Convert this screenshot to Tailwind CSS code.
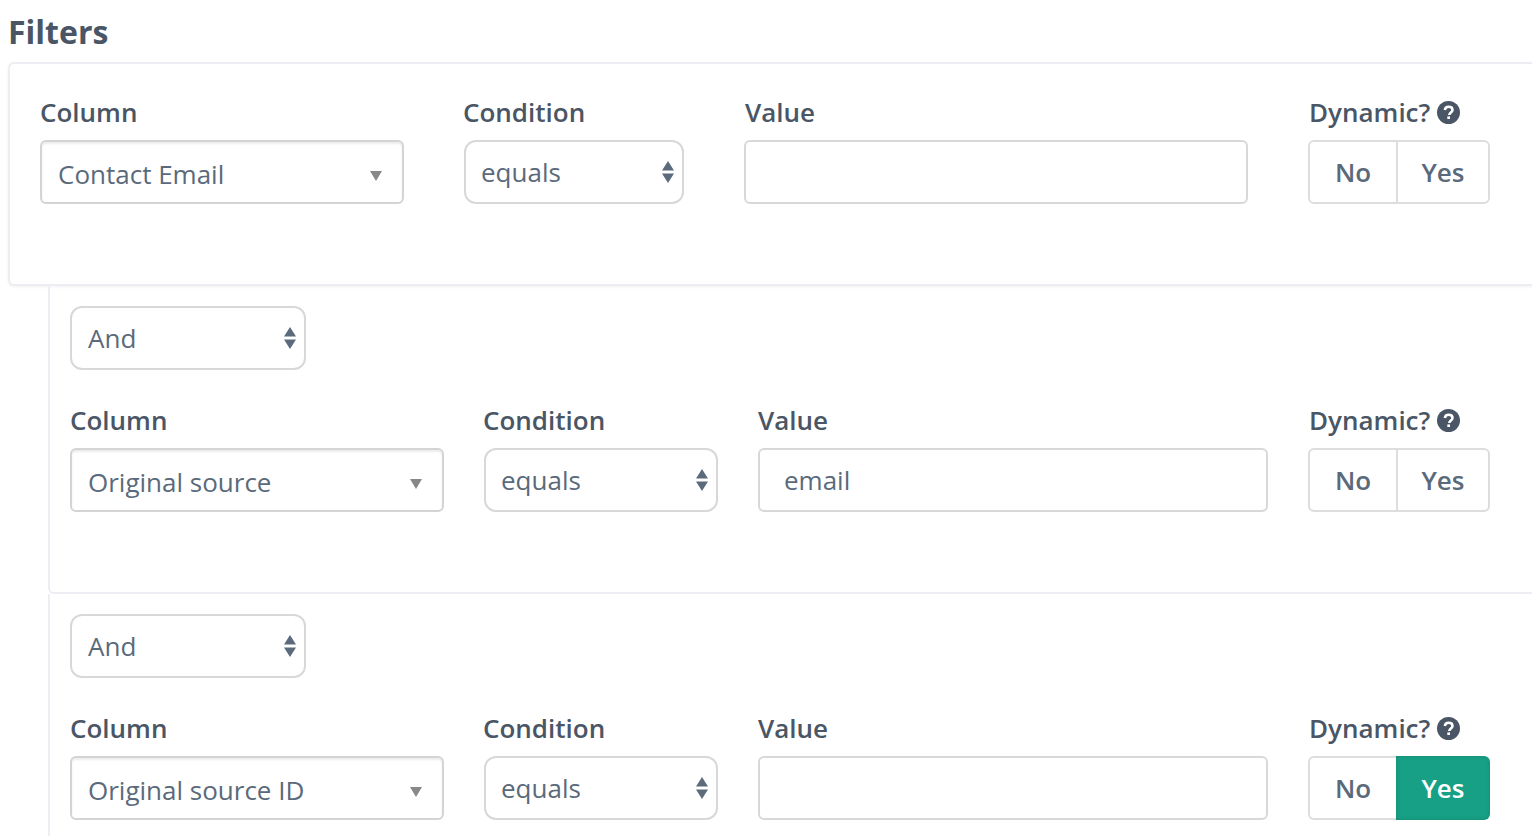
<!DOCTYPE html>
<html lang="en">
  <head>
    <meta charset="UTF-8" />
    <title>Filters</title>
    <script src="https://cdn.jsdelivr.net/npm/@tailwindcss/browser@4"></script>
  </head>
  <body class="bg-white overflow-hidden">
    <div class="w-[1532px] h-[836px] overflow-hidden pl-[8px] font-['Open_Sans',sans-serif] text-[#4a5665]">
      <h2 class="h-[62px] pt-[10px] text-[32px] leading-[44px] font-bold">Filters</h2>

      <div class="w-[1600px]">
        <!-- First filter -->
        <div class="h-[224px] border-2 border-[#eceef3] rounded-md shadow-[0_1px_3px_rgba(0,0,0,0.06)] pl-[30px] pt-[27px] bg-white">
          <div class="flex">
            <div class="w-[364px] mr-[60px]">
              <div class="h-[49px] text-[26px] leading-[42px] font-semibold">Column</div>
              <div class="h-[64px] border-2 border-[#d4d4d4] rounded-md shadow-[inset_0_2px_2px_rgba(0,0,0,0.08)] flex items-center justify-between pl-[16px] pr-[20px] text-[26px] text-[#5a6a7b]">
                <span class="mt-[4px]">Contact Email</span>
                <svg class="w-[12px] h-[10px] mt-[8px]" viewBox="0 0 12 10"><path d="M0 0h12L6 10z" fill="#888888" /></svg>
              </div>
            </div>
            <div class="w-[220px] mr-[60px]">
              <div class="h-[49px] -ml-[1px] text-[26px] leading-[42px] font-semibold">Condition</div>
              <div class="h-[64px] border-2 border-[#d8d8d8] rounded-[12px] flex items-center justify-between pl-[15px] pr-[8px] text-[26px] text-[#5a6a7b]">
                <span>equals</span>
                <svg class="w-[12px] h-[22px]" viewBox="0 0 12 22"><path d="M6 0l6 9.500H0zM0 12.500h12L6 22z" fill="#5c6b7c" /></svg>
              </div>
            </div>
            <div class="w-[504px] mr-[60px]">
              <div class="h-[49px] ml-[1px] text-[26px] leading-[42px] font-semibold">Value</div>
              <input type="text" class="w-full h-[64px] border-2 border-[#d8d8d8] rounded-md px-[24px] text-[26px] text-[#5a6a7b]" />
            </div>
            <div class="w-[182px]">
              <div class="h-[49px] ml-[1px] flex items-start text-[26px] leading-[42px] font-semibold">
                Dynamic?
                <svg class="w-[23px] h-[23px] ml-[7px] mt-[10px]" viewBox="0 0 23 23"><circle cx="11.500" cy="11.500" r="11.500" fill="#4a5665" /><path d="M7.800 9c.3-2 1.800-3.200 3.900-3.200 2.200 0 3.800 1.300 3.800 3.100 0 2.600-3.200 2.500-3.200 5" fill="none" stroke="#ffffff" stroke-width="2.600" /><path d="M10.300 15.400h2.700v2.600h-2.700z" fill="#ffffff" /></svg>
              </div>
              <div class="h-[64px] flex border-2 border-[#dddddd] rounded-md text-[26px] font-semibold text-[#5a6a7b]">
                <div class="w-[88px] border-r-2 border-[#dddddd] flex items-center justify-center">No</div>
                <div class="flex-1 flex items-center justify-center">Yes</div>
              </div>
            </div>
          </div>
        </div>

        <div class="ml-[40px]">
          <!-- Second filter -->
          <div class="h-[308px] border-l-2 border-b-2 border-[#eceef3] rounded-bl-md pl-[20px] pt-[20px]">
            <div class="w-[236px] h-[64px] border-2 border-[#d8d8d8] rounded-[12px] flex items-center justify-between pl-[16px] pr-[8px] text-[26px] text-[#5a6a7b]">
              <span class="mt-[1px]">And</span>
              <svg class="w-[12px] h-[22px]" viewBox="0 0 12 22"><path d="M6 0l6 9.500H0zM0 12.500h12L6 22z" fill="#5c6b7c" /></svg>
            </div>
            <div class="flex mt-[29px]">
              <div class="w-[374px] mr-[40px]">
                <div class="h-[49px] text-[26px] leading-[42px] font-semibold">Column</div>
                <div class="h-[64px] border-2 border-[#d4d4d4] rounded-md shadow-[inset_0_2px_2px_rgba(0,0,0,0.08)] flex items-center justify-between pl-[16px] pr-[20px] text-[26px] text-[#5a6a7b]">
                  <span class="mt-[4px]">Original source</span>
                  <svg class="w-[12px] h-[10px] mt-[8px]" viewBox="0 0 12 10"><path d="M0 0h12L6 10z" fill="#888888" /></svg>
                </div>
              </div>
              <div class="w-[234px] mr-[40px]">
                <div class="h-[49px] -ml-[1px] text-[26px] leading-[42px] font-semibold">Condition</div>
                <div class="h-[64px] border-2 border-[#d8d8d8] rounded-[12px] flex items-center justify-between pl-[15px] pr-[8px] text-[26px] text-[#5a6a7b]">
                  <span>equals</span>
                  <svg class="w-[12px] h-[22px]" viewBox="0 0 12 22"><path d="M6 0l6 9.500H0zM0 12.500h12L6 22z" fill="#5c6b7c" /></svg>
                </div>
              </div>
              <div class="w-[510px] mr-[40px]">
                <div class="h-[49px] text-[26px] leading-[42px] font-semibold">Value</div>
                <input type="text" value="email" class="w-full h-[64px] border-2 border-[#d8d8d8] rounded-md px-[24px] text-[26px] text-[#5a6a7b]" />
              </div>
              <div class="w-[182px]">
                <div class="h-[49px] ml-[1px] flex items-start text-[26px] leading-[42px] font-semibold">
                  Dynamic?
                  <svg class="w-[23px] h-[23px] ml-[7px] mt-[10px]" viewBox="0 0 23 23"><circle cx="11.500" cy="11.500" r="11.500" fill="#4a5665" /><path d="M7.800 9c.3-2 1.800-3.200 3.900-3.200 2.200 0 3.800 1.300 3.800 3.100 0 2.600-3.200 2.500-3.200 5" fill="none" stroke="#ffffff" stroke-width="2.600" /><path d="M10.300 15.400h2.700v2.600h-2.700z" fill="#ffffff" /></svg>
                </div>
                <div class="h-[64px] flex border-2 border-[#dddddd] rounded-md text-[26px] font-semibold text-[#5a6a7b]">
                  <div class="w-[88px] border-r-2 border-[#dddddd] flex items-center justify-center">No</div>
                  <div class="flex-1 flex items-center justify-center">Yes</div>
                </div>
              </div>
            </div>
          </div>

          <!-- Third filter -->
          <div class="h-[300px] border-l-2 border-[#eceef3] pl-[20px] pt-[20px]">
            <div class="w-[236px] h-[64px] border-2 border-[#d8d8d8] rounded-[12px] flex items-center justify-between pl-[16px] pr-[8px] text-[26px] text-[#5a6a7b]">
              <span class="mt-[1px]">And</span>
              <svg class="w-[12px] h-[22px]" viewBox="0 0 12 22"><path d="M6 0l6 9.500H0zM0 12.500h12L6 22z" fill="#5c6b7c" /></svg>
            </div>
            <div class="flex mt-[29px]">
              <div class="w-[374px] mr-[40px]">
                <div class="h-[49px] text-[26px] leading-[42px] font-semibold">Column</div>
                <div class="h-[64px] border-2 border-[#d4d4d4] rounded-md shadow-[inset_0_2px_2px_rgba(0,0,0,0.08)] flex items-center justify-between pl-[16px] pr-[20px] text-[26px] text-[#5a6a7b]">
                  <span class="mt-[4px]">Original source ID</span>
                  <svg class="w-[12px] h-[10px] mt-[8px]" viewBox="0 0 12 10"><path d="M0 0h12L6 10z" fill="#888888" /></svg>
                </div>
              </div>
              <div class="w-[234px] mr-[40px]">
                <div class="h-[49px] -ml-[1px] text-[26px] leading-[42px] font-semibold">Condition</div>
                <div class="h-[64px] border-2 border-[#d8d8d8] rounded-[12px] flex items-center justify-between pl-[15px] pr-[8px] text-[26px] text-[#5a6a7b]">
                  <span>equals</span>
                  <svg class="w-[12px] h-[22px]" viewBox="0 0 12 22"><path d="M6 0l6 9.500H0zM0 12.500h12L6 22z" fill="#5c6b7c" /></svg>
                </div>
              </div>
              <div class="w-[510px] mr-[40px]">
                <div class="h-[49px] text-[26px] leading-[42px] font-semibold">Value</div>
                <input type="text" class="w-full h-[64px] border-2 border-[#d8d8d8] rounded-md px-[24px] text-[26px] text-[#5a6a7b]" />
              </div>
              <div class="w-[182px]">
                <div class="h-[49px] ml-[1px] flex items-start text-[26px] leading-[42px] font-semibold">
                  Dynamic?
                  <svg class="w-[23px] h-[23px] ml-[7px] mt-[10px]" viewBox="0 0 23 23"><circle cx="11.500" cy="11.500" r="11.500" fill="#4a5665" /><path d="M7.800 9c.3-2 1.800-3.200 3.900-3.200 2.200 0 3.800 1.300 3.800 3.100 0 2.600-3.200 2.500-3.200 5" fill="none" stroke="#ffffff" stroke-width="2.600" /><path d="M10.300 15.400h2.700v2.600h-2.700z" fill="#ffffff" /></svg>
                </div>
                <div class="h-[64px] flex text-[26px] font-semibold">
                  <div class="w-[88px] border-2 border-r-0 border-[#dddddd] rounded-l-md flex items-center justify-center text-[#5a6a7b]">No</div>
                  <div class="flex-1 bg-[#17a085] rounded-r-md shadow-[inset_0_0_4px_rgba(0,0,0,0.15)] flex items-center justify-center text-white">Yes</div>
                </div>
              </div>
            </div>
          </div>
        </div>
      </div>
    </div>
  </body>
</html>
